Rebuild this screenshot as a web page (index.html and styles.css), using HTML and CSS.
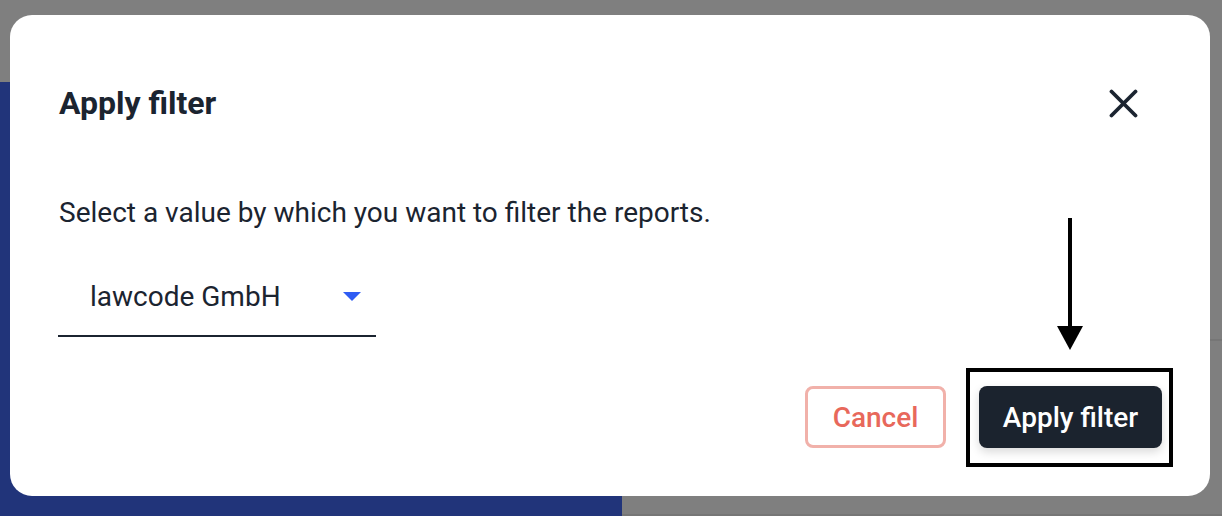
FILE: index.html
```html
<!doctype html>
<html lang="en">

<head>
  <meta charset="UTF-8" />
  <meta name="viewport" content="width=device-width, initial-scale=1.0" />
  <title>Apply filter</title>
  <link rel="stylesheet" href="styles.css">
</head>

<body>
  <div class="backdrop">
    <div class="backdrop-top"></div>
    <div class="backdrop-main">
      <div class="sidebar"></div>
      <div class="content">
        <div class="content-row"></div>
      </div>
    </div>
  </div>

  <div class="modal">
    <div class="modal-header">
      <h2 class="modal-title">Apply filter</h2>
      <button class="close-btn" aria-label="Close">
        <svg width="29" height="29" viewBox="0 0 29 29">
          <path d="M2.5 2.5 L26.5 26.5 M26.5 2.5 L2.5 26.5" stroke="#1b2430" stroke-width="3.8" stroke-linecap="round" fill="none" />
        </svg>
      </button>
    </div>

    <p class="modal-text">Select a value by which you want to filter the reports.</p>

    <div class="select">
      <span class="select-value">lawcode GmbH</span>
      <span class="select-caret"></span>
    </div>

    <div class="modal-footer">
      <button class="btn btn-cancel">Cancel</button>
      <button class="btn btn-apply">Apply filter</button>
    </div>
  </div>

  <!-- annotation -->
  <div class="mark-box"></div>
  <div class="mark-arrow">
    <div class="arrow-line"></div>
    <div class="arrow-head"></div>
  </div>
</body>

</html>
```

FILE: styles.css
```css
* {
  margin: 0;
  padding: 0;
  box-sizing: border-box;
}

body {
  width: 1222px;
  height: 516px;
  overflow: hidden;
  background: #7f7f7f;
  font-family: Roboto, 'Liberation Sans', sans-serif;
  color: #1b2430;
  position: relative;
}

.backdrop {
  display: flex;
  flex-direction: column;
  height: 100%;
}

.backdrop-top {
  height: 82px;
}

.backdrop-main {
  flex: 1;
  display: flex;
}

.sidebar {
  width: 622px;
  background: #21347a;
}

.content {
  flex: 1;
  border-bottom: 2px solid #767676;
}

.content-row {
  height: 259px;
  border-bottom: 2px solid #767676;
}

.modal {
  position: absolute;
  left: 10px;
  top: 15px;
  width: 1200px;
  height: 481px;
  background: #fff;
  border-radius: 22px;
  padding: 48px 48px 0 49px;
  display: flex;
  flex-direction: column;
}

.modal-header {
  height: 80px;
  display: flex;
  align-items: center;
  justify-content: space-between;
  padding-right: 19px;
}

.modal-title {
  font-size: 32px;
  font-weight: 700;
  line-height: 40px;
}

.close-btn {
  width: 40px;
  height: 40px;
  border: none;
  background: none;
  display: flex;
  align-items: center;
  justify-content: center;
  cursor: pointer;
}

.modal-text {
  margin-top: 53px;
  font-size: 28px;
  line-height: 34px;
}

.select {
  margin-top: 27px;
  width: 318px;
  height: 80px;
  margin-left: -1px;
  padding: 0 15px 0 32px;
  border-bottom: 2px solid #1b2430;
  display: flex;
  align-items: center;
  justify-content: space-between;
}

.select-value {
  font-size: 28px;
}

.select-caret {
  width: 0;
  height: 0;
  border-left: 9px solid transparent;
  border-right: 9px solid transparent;
  border-top: 9px solid #2f5cf3;
}

.modal-footer {
  margin-top: 49px;
  display: flex;
  justify-content: flex-end;
  gap: 33px;
}

.btn {
  height: 62px;
  border-radius: 8px;
  font-family: Roboto, 'Liberation Sans', sans-serif;
  font-size: 28px;
  font-weight: 500;
  cursor: pointer;
}

.btn-cancel {
  width: 141px;
  background: #fff;
  border: 3px solid #f1b1aa;
  color: #e8685b;
}

.btn-apply {
  width: 183px;
  background: #1b232e;
  border: none;
  color: #fff;
  box-shadow: 0 4px 10px rgba(0, 0, 0, 0.15);
}

.mark-box {
  position: absolute;
  left: 966px;
  top: 368px;
  width: 207px;
  height: 99px;
  border: 4px solid #000;
}

.mark-arrow {
  position: absolute;
  left: 1057px;
  top: 218px;
  width: 26px;
  display: flex;
  flex-direction: column;
  align-items: center;
}

.arrow-line {
  width: 4px;
  height: 108px;
  background: #000;
}

.arrow-head {
  width: 0;
  height: 0;
  border-left: 13px solid transparent;
  border-right: 13px solid transparent;
  border-top: 24px solid #000;
}
```
